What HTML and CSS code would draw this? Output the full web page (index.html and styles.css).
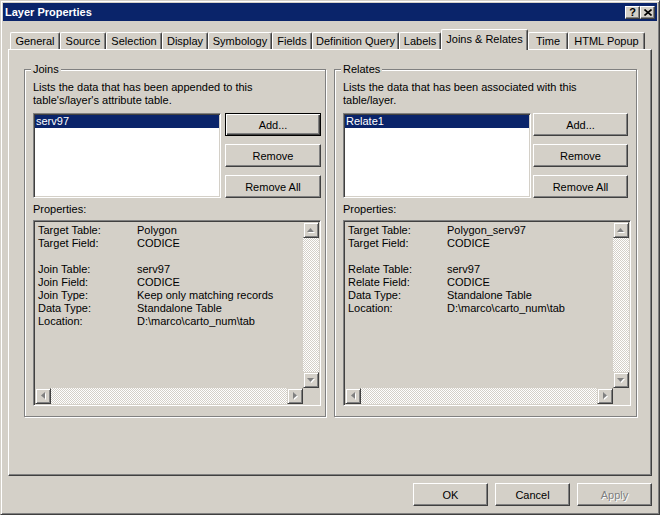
FILE: index.html
```html
<!DOCTYPE html>
<html>
<head>
<meta charset="utf-8">
<title>Layer Properties</title>
<link rel="stylesheet" href="styles.css">
</head>
<body>
<div class="window">
  <div class="titlebar">
    <span class="title">Layer Properties</span>
    <div class="tbtns">
      <span class="tbtn help">?</span>
      <span class="tbtn"><svg width="8" height="7" viewBox="0 0 8 7"><path d="M0.5 0.5 L7.5 6.5 M7.5 0.5 L0.5 6.5" stroke="#000" stroke-width="1.6"/></svg></span>
    </div>
  </div>
  <div class="body">
    <div class="tabs">
      <div class="tab w-general">General</div>
      <div class="tab w-source">Source</div>
      <div class="tab w-selection">Selection</div>
      <div class="tab w-display">Display</div>
      <div class="tab w-symbology">Symbology</div>
      <div class="tab w-fields">Fields</div>
      <div class="tab w-defq">Definition Query</div>
      <div class="tab w-labels">Labels</div>
      <div class="tab sel w-joins">Joins &amp; Relates</div>
      <div class="tab w-time">Time</div>
      <div class="tab w-html">HTML Popup</div>
    </div>
    <div class="panel">
      <div class="group g-joins">
        <span class="glabel">Joins</span>
        <div class="desc">Lists the data that has been appended to this<br>table's/layer's attribute table.</div>
        <div class="row">
          <div class="list sunken"><div class="item">serv97</div></div>
          <div class="btns">
            <div class="btn default">Add...</div>
            <div class="btn">Remove</div>
            <div class="btn">Remove All</div>
          </div>
        </div>
        <div class="plabel">Properties:</div>
        <div class="propbox sunken">
          <div class="ptext">
            <span>Target Table:</span><span>Polygon</span>
            <span>Target Field:</span><span>CODICE</span>
            <span class="blank"></span><span class="blank"></span>
            <span>Join Table:</span><span>serv97</span>
            <span>Join Field:</span><span>CODICE</span>
            <span>Join Type:</span><span>Keep only matching records</span>
            <span>Data Type:</span><span>Standalone Table</span>
            <span>Location:</span><span>D:\marco\carto_num\tab</span>
          </div>
          <div class="vscroll">
            <div class="sbtn"><svg width="8" height="5" viewBox="0 0 8 5"><polygon points="3.5,0 7,4 0,4" fill="#fff" transform="translate(1,1)"/><polygon points="3.5,0 7,4 0,4" fill="#808080"/></svg></div>
            <div class="track"></div>
            <div class="sbtn"><svg width="8" height="5" viewBox="0 0 8 5"><polygon points="0,0 7,0 3.5,4" fill="#fff" transform="translate(1,1)"/><polygon points="0,0 7,0 3.5,4" fill="#808080"/></svg></div>
          </div>
          <div class="hscroll">
            <div class="sbtn"><svg width="5" height="8" viewBox="0 0 5 8"><polygon points="4,0 4,7 0,3.5" fill="#fff" transform="translate(1,1)"/><polygon points="4,0 4,7 0,3.5" fill="#808080"/></svg></div>
            <div class="track"></div>
            <div class="sbtn"><svg width="5" height="8" viewBox="0 0 5 8"><polygon points="0,0 0,7 4,3.5" fill="#fff" transform="translate(1,1)"/><polygon points="0,0 0,7 4,3.5" fill="#808080"/></svg></div>
          </div>
          <div class="corner"></div>
        </div>
      </div>
      <div class="group g-relates">
        <span class="glabel">Relates</span>
        <div class="desc">Lists the data that has been associated with this<br>table/layer.</div>
        <div class="row">
          <div class="list sunken"><div class="item">Relate1</div></div>
          <div class="btns">
            <div class="btn">Add...</div>
            <div class="btn">Remove</div>
            <div class="btn">Remove All</div>
          </div>
        </div>
        <div class="plabel">Properties:</div>
        <div class="propbox sunken">
          <div class="ptext">
            <span>Target Table:</span><span>Polygon_serv97</span>
            <span>Target Field:</span><span>CODICE</span>
            <span class="blank"></span><span class="blank"></span>
            <span>Relate Table:</span><span>serv97</span>
            <span>Relate Field:</span><span>CODICE</span>
            <span>Data Type:</span><span>Standalone Table</span>
            <span>Location:</span><span>D:\marco\carto_num\tab</span>
          </div>
          <div class="vscroll">
            <div class="sbtn"><svg width="8" height="5" viewBox="0 0 8 5"><polygon points="3.5,0 7,4 0,4" fill="#fff" transform="translate(1,1)"/><polygon points="3.5,0 7,4 0,4" fill="#808080"/></svg></div>
            <div class="track"></div>
            <div class="sbtn"><svg width="8" height="5" viewBox="0 0 8 5"><polygon points="0,0 7,0 3.5,4" fill="#fff" transform="translate(1,1)"/><polygon points="0,0 7,0 3.5,4" fill="#808080"/></svg></div>
          </div>
          <div class="hscroll">
            <div class="sbtn"><svg width="5" height="8" viewBox="0 0 5 8"><polygon points="4,0 4,7 0,3.5" fill="#fff" transform="translate(1,1)"/><polygon points="4,0 4,7 0,3.5" fill="#808080"/></svg></div>
            <div class="track"></div>
            <div class="sbtn"><svg width="5" height="8" viewBox="0 0 5 8"><polygon points="0,0 0,7 4,3.5" fill="#fff" transform="translate(1,1)"/><polygon points="0,0 0,7 4,3.5" fill="#808080"/></svg></div>
          </div>
          <div class="corner"></div>
        </div>
      </div>
    </div>
    <div class="footer">
      <div class="btn fbtn">OK</div>
      <div class="btn fbtn">Cancel</div>
      <div class="btn fbtn disabled">Apply</div>
    </div>
  </div>
</div>
</body>
</html>
```
FILE: styles.css
```css
* { box-sizing: border-box; }

body {
  margin: 0;
  background: #d4d0c8;
  font-family: "Liberation Sans", Arial, sans-serif;
  font-size: 11px;
  color: #000;
}

.window {
  width: 660px;
  height: 515px;
  background: #d4d0c8;
  border: 1px solid;
  border-color: #d4d0c8 #404040 #404040 #d4d0c8;
  box-shadow: inset 1px 1px 0 #fff, inset -1px -1px 0 #808080;
  padding: 2px;
  display: flex;
  flex-direction: column;
}

.titlebar {
  height: 18px;
  background: #0a246a;
  color: #fff;
  display: flex;
  align-items: center;
  justify-content: space-between;
  padding: 0 2px 0 2px;
}
.title { font-weight: bold; font-size: 11px; }
.tbtns { display: flex; gap: 0; }
.tbtn {
  width: 15px;
  height: 13px;
  background: #d4d0c8;
  border: 1px solid;
  border-color: #fff #404040 #404040 #fff;
  box-shadow: inset -1px -1px 0 #808080;
  display: flex;
  align-items: center;
  justify-content: center;
  color: #000;
}
.tbtn.help { font-weight: bold; font-size: 11px; line-height: 11px; }

.body {
  flex: 1;
  display: flex;
  flex-direction: column;
  padding: 0 5px;
}

.tabs {
  display: flex;
  align-items: flex-end;
  height: 20px;
  margin: 8px 0 0 2px;
}
.tab {
  height: 17px;
  border-top: 1px solid #fff;
  border-left: 1px solid #fff;
  border-right: 1px solid #404040;
  box-shadow: inset -1px 0 0 #808080;
  border-radius: 2px 2px 0 0;
  display: flex;
  align-items: center;
  justify-content: center;
  white-space: nowrap;
}
.tab.sel {
  height: 21px;
  margin-bottom: -1px;
  position: relative;
  z-index: 2;
  background: #d4d0c8;
  padding-bottom: 2px;
}
.w-general { width: 50px; }
.w-source { width: 46px; }
.w-selection { width: 56px; }
.w-display { width: 46px; }
.w-symbology { width: 64px; }
.w-fields { width: 40px; }
.w-defq { width: 87px; }
.w-labels { width: 42px; }
.w-joins { width: 87px; }
.w-time { width: 40px; }
.w-html { width: 77px; }

.panel {
  height: 427px;
  border-top: 1px solid #fff;
  border-left: 1px solid #fff;
  border-right: 1px solid #404040;
  border-bottom: 1px solid #404040;
  box-shadow: inset -1px -1px 0 #808080;
  padding: 19px 0 0 15px;
  display: flex;
  gap: 8px;
  align-items: flex-start;
}

.group {
  height: 348px;
  border: 1px solid #808080;
  box-shadow: inset 1px 1px 0 #fff, 1px 1px 0 #fff;
  padding: 0 4px 9px 8px;
  display: flex;
  flex-direction: column;
}
.g-joins { width: 302px; }
.g-relates { width: 303px; padding-right: 5px; }
.g-relates .row { gap: 2px; }
.g-relates .btns { width: 95px; }

.glabel {
  align-self: flex-start;
  margin: -7px 0 0 -2px;
  padding: 0 2px;
  background: #d4d0c8;
  line-height: 13px;
}
.desc { margin-top: 5px; line-height: 13px; }

.row { display: flex; gap: 4px; margin-top: 6px; }

.sunken {
  border: 1px solid;
  border-color: #808080 #fff #fff #808080;
  box-shadow: inset 1px 1px 0 #404040, inset -1px -1px 0 #d4d0c8;
}
.list {
  width: 188px;
  height: 85px;
  background: #fff;
  padding: 1px;
}
.item {
  background: #0a246a;
  color: #fff;
  line-height: 13px;
  padding-left: 1px;
}

.btns { display: flex; flex-direction: column; gap: 8px; width: 96px; }
.btn {
  height: 23px;
  background: #d4d0c8;
  border: 1px solid;
  border-color: #fff #404040 #404040 #fff;
  box-shadow: inset -1px -1px 0 #808080;
  display: flex;
  align-items: center;
  justify-content: center;
}
.btn.default {
  border-color: #000;
  box-shadow: inset 1px 1px 0 #fff, inset -1px -1px 0 #404040, inset -2px -2px 0 #808080;
}

.plabel { margin-top: 5px; line-height: 13px; }

.propbox {
  margin-top: 4px;
  height: 186px;
  padding: 1px;
  background: #d4d0c8;
  display: grid;
  grid-template-columns: 1fr 16px;
  grid-template-rows: 1fr 16px;
}
.ptext {
  padding: 2px 0 0 3px;
  display: grid;
  grid-template-columns: 99px auto;
  align-content: start;
  line-height: 13px;
  white-space: nowrap;
  overflow: hidden;
}
.blank { height: 13px; }

.vscroll { display: flex; flex-direction: column; }
.hscroll { display: flex; }
.track {
  flex: 1;
  background-color: #fff;
  background-image: repeating-conic-gradient(#d4d0c8 0 25%, #fff 0 50%);
  background-size: 2px 2px;
}
.sbtn {
  width: 16px;
  height: 16px;
  flex: none;
  background: #d4d0c8;
  border: 1px solid;
  border-color: #d4d0c8 #404040 #404040 #d4d0c8;
  box-shadow: inset 1px 1px 0 #fff, inset -1px -1px 0 #808080;
  display: flex;
  align-items: center;
  justify-content: center;
}
.sbtn svg { display: block; }
.corner { background: #d4d0c8; }

.footer {
  display: flex;
  justify-content: flex-end;
  gap: 7px;
  margin-top: 7px;
}
.fbtn { width: 75px; }
.btn.disabled { color: #808080; text-shadow: 1px 1px 0 #fff; }
```
